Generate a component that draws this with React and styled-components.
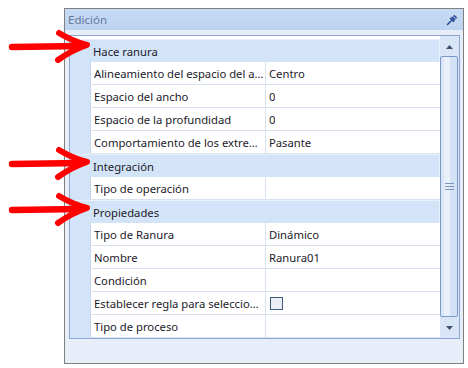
import React from "react";
import styled, { createGlobalStyle } from "styled-components";

const GlobalStyle = createGlobalStyle`
  html, body { margin: 0; padding: 0; background: #ffffff; }
  body { font-family: "Noto Sans", "Open Sans", sans-serif; font-size: 11.25px; }
  * { box-sizing: border-box; }
`;

const Page = styled.div`
  position: relative;
  width: 468px;
  height: 368px;
  padding: 8px 0 0 64px;
  overflow: hidden;
`;

const Panel = styled.div`
  width: 400px;
  height: 356px;
  border: 1px solid #808080;
  background: #e7eef9;
  display: flex;
  flex-direction: column;
`;

const TitleBar = styled.div`
  height: 21px;
  flex: none;
  display: flex;
  align-items: center;
  justify-content: space-between;
  padding: 0 5px 0 3px;
  background: linear-gradient(#c8dbf4, #bcd3f1);
  color: #66789a;
  font-size: 11.5px;
`;

const Body = styled.div`
  padding: 5px 3px 0 4px;
`;

const Grid = styled.div`
  height: 304px;
  border: 1px solid #8ea8d3;
  background: #ffffff;
  display: flex;
  overflow: hidden;
`;

const Rows = styled.div`
  flex: 1;
  min-width: 0;
  padding-top: 3px;
  display: flex;
  flex-direction: column;
`;

const Category = styled.div`
  height: 23px;
  flex: none;
  display: flex;
  align-items: center;
  padding-left: 23px;
  background: #d4e4f8;
  border-top: 1px solid #e8f0fb;
  border-right: 1px solid #e8f0fb;
  color: #1c1a2a;
`;

const Row = styled.div`
  height: 23px;
  flex: none;
  display: grid;
  grid-template-columns: 20px 175px minmax(0, 1fr);
`;

const Margin = styled.div`
  background: #d4e4f8;
`;

const Cell = styled.div`
  display: flex;
  align-items: center;
  padding-left: 3px;
  padding-right: 1px;
  border-left: 1px solid ${(p) => (p.$value ? "#d8e2ef" : "#c6d6ec")};
  border-bottom: 1px solid #d8e2ef;
  color: #1c1a2a;
  white-space: nowrap;
  overflow: hidden;
  min-width: 0;
`;

const Label = styled.span`
  overflow: hidden;
  text-overflow: ellipsis;
  white-space: nowrap;
  min-width: 0;
`;

const Check = styled.span`
  width: 13px;
  height: 13px;
  border: 1px solid #3e5b82;
  background: #eaeff6;
  margin-left: 1px;
`;

const Scroll = styled.div`
  width: 19px;
  flex: none;
  background: #d7e5f7;
  display: flex;
  flex-direction: column;
  padding: 2px 1px 0 0;
`;

const ScrollBtn = styled.div`
  height: ${(p) => p.$h}px;
  flex: none;
  display: flex;
  align-items: center;
  justify-content: center;
`;

const Thumb = styled.div`
  flex: 1;
  border: 1px solid #7b98c6;
  border-radius: 2px;
  background: linear-gradient(90deg, #dbe7f7 0, #dbe7f7 3px, #e9f0fa 3px, #e9f0fa 9px, #d3e2f5 9px);
  display: flex;
  align-items: center;
  justify-content: center;
`;

const Grip = styled.div`
  width: 9px;
  height: 7px;
  background: linear-gradient(#7d95be 0 1px, transparent 1px 3px, #7d95be 3px 4px, transparent 4px 6px, #7d95be 6px 7px);
`;

const Arrows = styled.svg`
  position: absolute;
  left: 0;
  top: 0;
  pointer-events: none;
`;

const Arrow = ({ y }) => (
  <g transform={`translate(0 ${y})`} fill="none" stroke="#ff0000" strokeLinecap="round" strokeLinejoin="round">
    <path d="M12 1 L82 0" strokeWidth="6.5" />
    <path d="M59 -13 Q72 -5 87 -1 Q72 4 58 14" strokeWidth="6" />
  </g>
);

const Pin = () => (
  <svg width="12" height="12" viewBox="0 0 12 12">
    <path d="M1.5 10.5 L5 7" stroke="#1f3f86" strokeWidth="1.4" strokeLinecap="round" />
    <path d="M4 4.5 L7.5 8 L8.2 6.2 L10.8 3.6 L8.4 1.2 L5.8 3.8 Z" fill="#2f56b0" stroke="#1b3578" strokeWidth="0.8" />
    <path d="M7.2 2.4 L9.6 4.8" stroke="#ffffff" strokeWidth="0.8" />
  </svg>
);

const Tri = ({ up }) => (
  <svg width="7" height="4" viewBox="0 0 7 4">
    <path d={up ? "M0 4 L3.5 0 L7 4 Z" : "M0 0 L3.5 4 L7 0 Z"} fill="#3d4f6e" />
  </svg>
);

const sections = [
  {
    title: "Hace ranura",
    rows: [
      ["Alineamiento del espacio del ancho", "Centro"],
      ["Espacio del ancho", "0"],
      ["Espacio de la profundidad", "0"],
      ["Comportamiento de los extremos", "Pasante"],
    ],
  },
  { title: "Integración", rows: [["Tipo de operación", ""]] },
  {
    title: "Propiedades",
    rows: [
      ["Tipo de Ranura", "Dinámico"],
      ["Nombre", "Ranura01"],
      ["Condición", ""],
      ["Establecer regla para seleccionar", "check"],
      ["Tipo de proceso", ""],
    ],
  },
];

export default function App() {
  return (
    <Page>
      <GlobalStyle />
      <Panel>
        <TitleBar>
          <span>Edición</span>
          <Pin />
        </TitleBar>
        <Body>
          <Grid>
            <Rows>
              {sections.map((s) => (
                <React.Fragment key={s.title}>
                  <Category>{s.title}</Category>
                  {s.rows.map(([name, value]) => (
                    <Row key={name}>
                      <Margin />
                      <Cell>
                        <Label>{name}</Label>
                      </Cell>
                      <Cell $value>{value === "check" ? <Check /> : <Label>{value}</Label>}</Cell>
                    </Row>
                  ))}
                </React.Fragment>
              ))}
            </Rows>
            <Scroll>
              <ScrollBtn $h={18}>
                <Tri up />
              </ScrollBtn>
              <Thumb>
                <Grip />
              </Thumb>
              <ScrollBtn $h={21}>
                <Tri />
              </ScrollBtn>
            </Scroll>
          </Grid>
        </Body>
      </Panel>
      <Arrows width="468" height="368" viewBox="0 0 468 368">
        <Arrow y={46} />
        <Arrow y={163} />
        <Arrow y={209} />
      </Arrows>
    </Page>
  );
}
